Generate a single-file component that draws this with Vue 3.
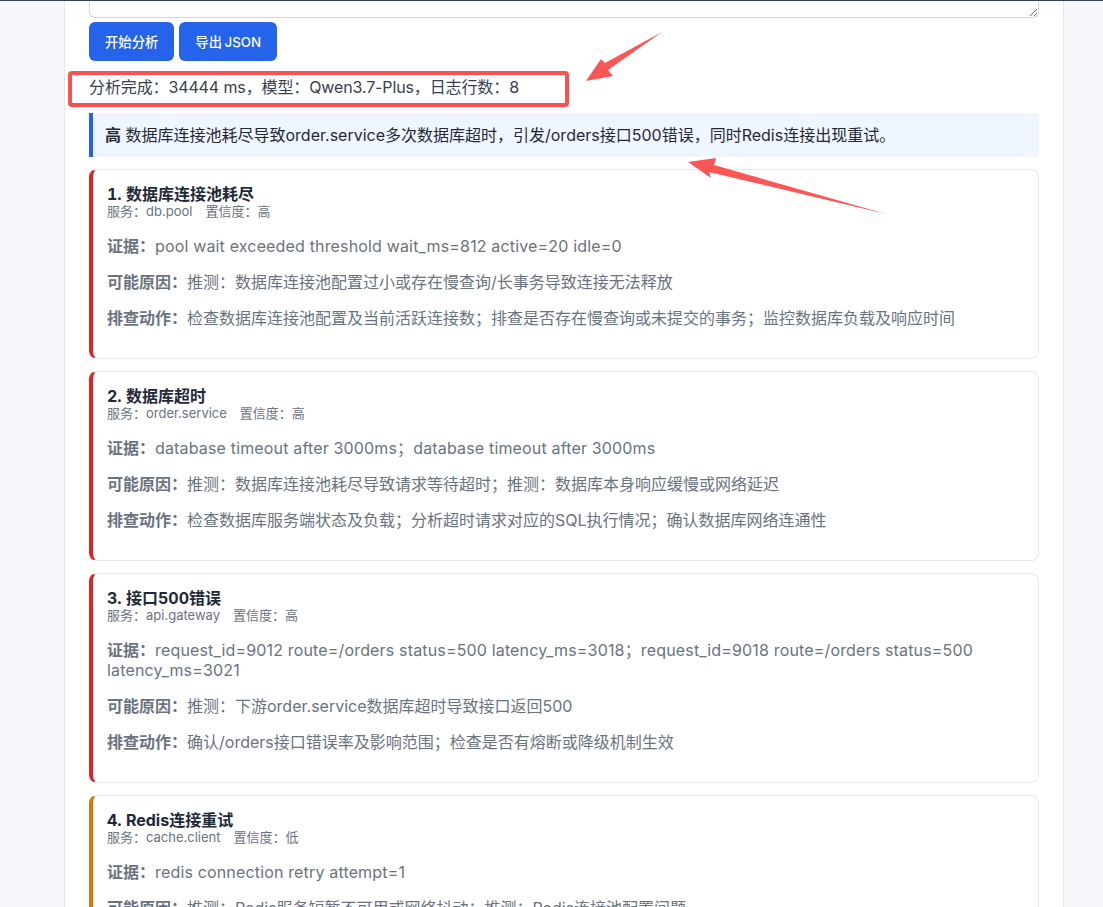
<template>
  <div class="page">
    <div class="topline"></div>
    <main class="panel">
      <textarea class="log-input" aria-label="日志"></textarea>
      <div class="actions">
        <button class="btn">开始分析</button>
        <button class="btn">导出 JSON</button>
      </div>
      <p class="status">分析完成：34444 ms，模型：Qwen3.7-Plus，日志行数：8</p>
      <div class="summary">
        <strong>高</strong> 数据库连接池耗尽导致order.service多次数据库超时，引发/orders接口500错误，同时Redis连接出现重试。
      </div>
      <section
        v-for="(item, index) in findings"
        :key="item.title"
        class="card"
        :class="item.level"
      >
        <h3>{{ index + 1 }}. {{ item.title }}</h3>
        <div class="meta">
          <span>服务：{{ item.service }}</span>
          <span>置信度：{{ item.confidence }}</span>
        </div>
        <p><strong>证据：</strong><span class="evidence">{{ item.evidence }}</span></p>
        <p><strong>可能原因：</strong>{{ item.cause }}</p>
        <p><strong>排查动作：</strong>{{ item.action }}</p>
      </section>
    </main>

    <svg class="marks" viewBox="0 0 1103 907" aria-hidden="true">
      <rect x="70" y="73" width="497" height="32" rx="2" fill="none" stroke="#fc5050" stroke-width="4" />
      <polygon points="662,32 605,63 601,59 586,81 613,76 608,70" fill="#fc5555" />
      <polygon points="688,162 716,158 714,165 886,214 709,172 711,178" fill="#fc5555" />
    </svg>
  </div>
</template>

<script setup>
const findings = [
  {
    title: "数据库连接池耗尽",
    level: "high",
    service: "db.pool",
    confidence: "高",
    evidence: "pool wait exceeded threshold wait_ms=812 active=20 idle=0",
    cause: "推测：数据库连接池配置过小或存在慢查询/长事务导致连接无法释放",
    action: "检查数据库连接池配置及当前活跃连接数；排查是否存在慢查询或未提交的事务；监控数据库负载及响应时间"
  },
  {
    title: "数据库超时",
    level: "high",
    service: "order.service",
    confidence: "高",
    evidence: "database timeout after 3000ms；database timeout after 3000ms",
    cause: "推测：数据库连接池耗尽导致请求等待超时；推测：数据库本身响应缓慢或网络延迟",
    action: "检查数据库服务端状态及负载；分析超时请求对应的SQL执行情况；确认数据库网络连通性"
  },
  {
    title: "接口500错误",
    level: "high",
    service: "api.gateway",
    confidence: "高",
    evidence: "request_id=9012 route=/orders status=500 latency_ms=3018；request_id=9018 route=/orders status=500 latency_ms=3021",
    cause: "推测：下游order.service数据库超时导致接口返回500",
    action: "确认/orders接口错误率及影响范围；检查是否有熔断或降级机制生效"
  },
  {
    title: "Redis连接重试",
    level: "low",
    service: "cache.client",
    confidence: "低",
    evidence: "redis connection retry attempt=1",
    cause: "推测：Redis服务短暂不可用或网络抖动；推测：Redis连接池配置问题",
    action: "检查Redis服务状态及网络连通性"
  }
];
</script>

<style>
html,
body {
  margin: 0;
  height: 907px;
  overflow: hidden;
  background: #f5f7fa;
}
</style>

<style scoped>
.page {
  position: relative;
  height: 907px;
  overflow: hidden;
  font-family: Inter, "Noto Sans CJK SC", sans-serif;
  color: #1f2937;
}

.topline {
  height: 1px;
  background: #334155;
}

.panel {
  width: 950px;
  margin: 0 0 0 64px;
  padding: 0 24px;
  background: #fff;
  border-left: 1px solid #e5e7eb;
  border-right: 1px solid #e5e7eb;
  height: 906px;
}

.log-input {
  display: block;
  box-sizing: border-box;
  width: 100%;
  height: 17px;
  padding: 0;
  border: 1px solid #d1d5db;
  border-top: none;
  border-radius: 0 0 6px 6px;
  outline: none;
  resize: vertical;
}

.actions {
  display: flex;
  gap: 5px;
  margin-top: 4px;
}

.btn {
  height: 39px;
  padding: 0 16px;
  border: none;
  border-radius: 6px;
  background: #2563eb;
  color: #fff;
  font: 500 13.33px Inter, "Noto Sans CJK SC", sans-serif;
  word-spacing: -1px;
}

.status {
  margin: 16px 0;
  color: #374151;
  font-size: 16px;
  line-height: 20px;
  letter-spacing: -0.12px;
}

.summary {
  box-sizing: border-box;
  height: 44px;
  margin-bottom: 12px;
  padding: 0 12px;
  border-left: 4px solid #2563eb;
  background: #eff6ff;
  font-size: 16px;
  line-height: 44px;
}

.card {
  box-sizing: border-box;
  margin-bottom: 12px;
  padding: 15px 15px 14px 14px;
  background: #fff;
  border: 1px solid #e5e7eb;
  border-left: 4px solid #dc2626;
  border-radius: 8px;
}

.card.low {
  border-left-color: #d97706;
}

.card h3 {
  margin: 0;
  font-size: 16px;
  font-weight: 700;
  line-height: 18px;
  font-variant-numeric: tabular-nums;
}

.meta {
  display: flex;
  gap: 13px;
  padding-bottom: 1px;
  color: #6b7280;
  font-size: 13px;
  line-height: 16px;
}

.card p {
  margin: 16px 0;
  color: #6b7280;
  font-size: 16px;
  line-height: 20px;
}

.evidence {
  letter-spacing: 0.16px;
}

.marks {
  position: absolute;
  top: 0;
  left: 0;
  width: 1103px;
  height: 907px;
  pointer-events: none;
}
</style>
